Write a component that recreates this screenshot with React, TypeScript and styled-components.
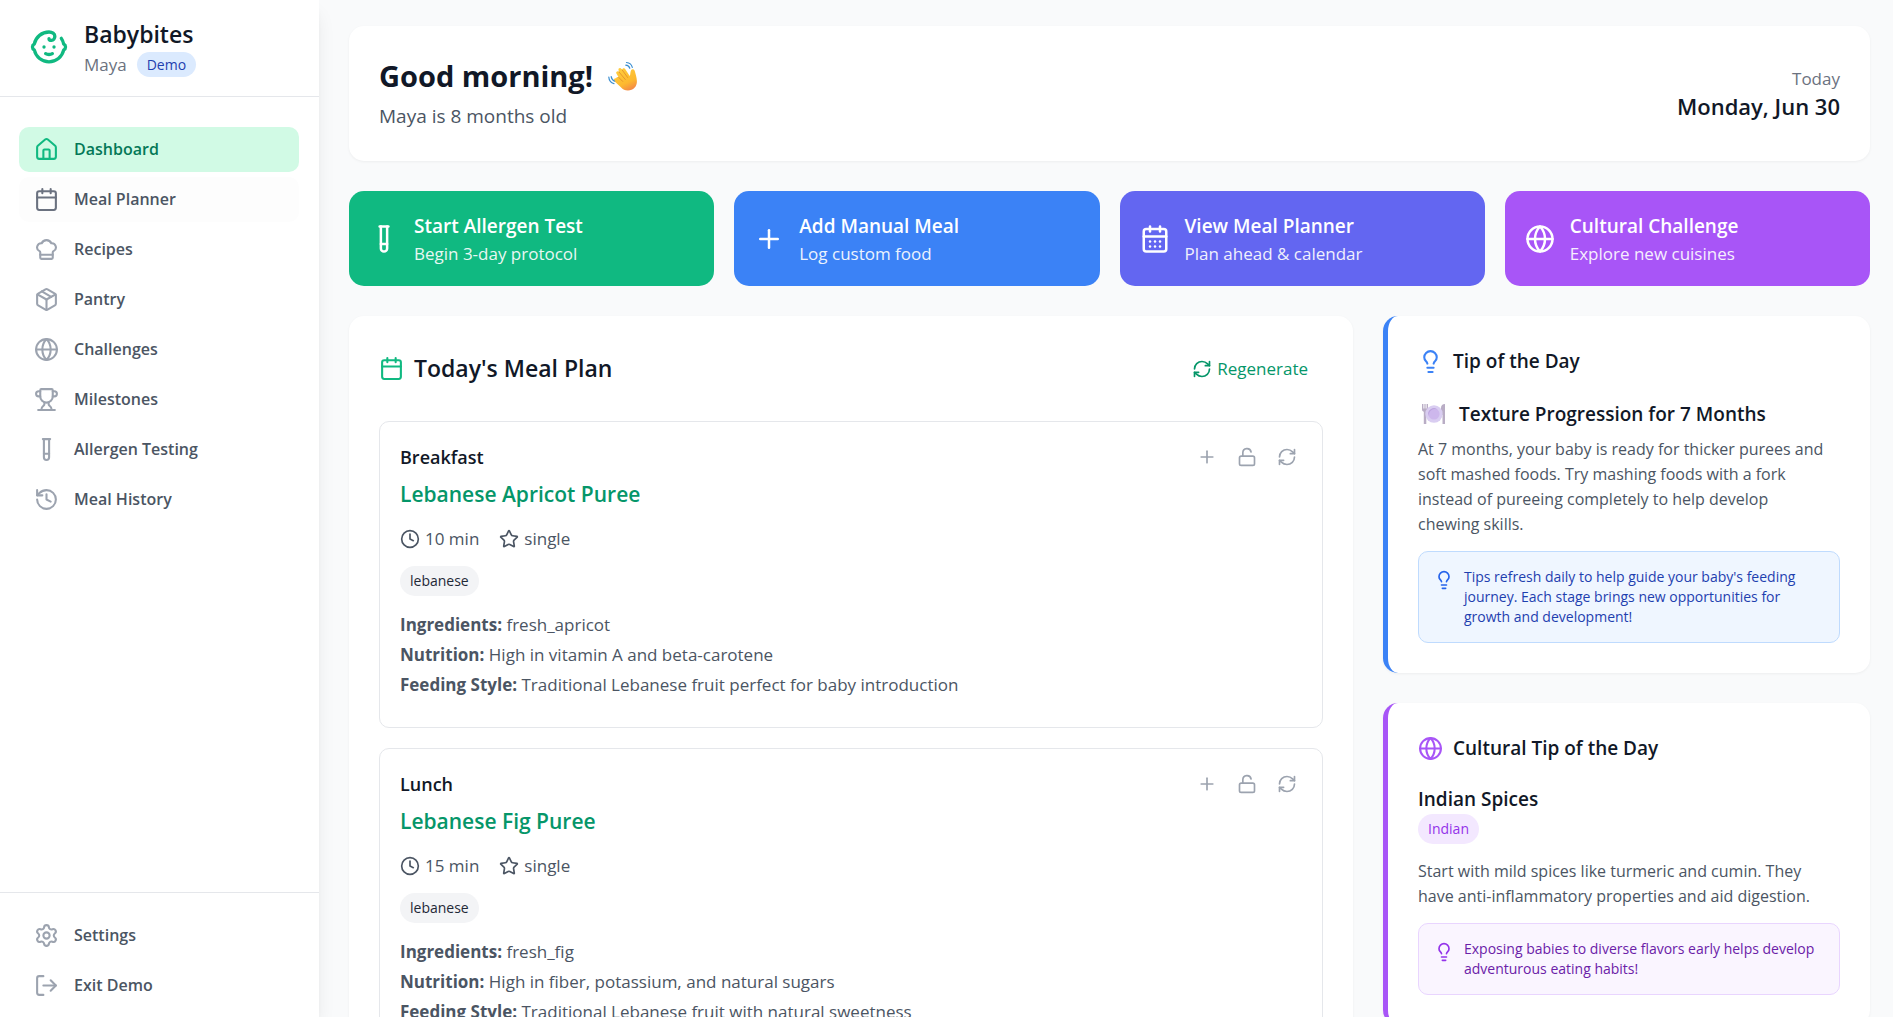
import React from "react";
import styled, { createGlobalStyle } from "styled-components";
import {
  Baby, House, Calendar, CalendarDays, ChefHat, Package, Globe, Trophy, TestTube, History,
  Settings, Plus, RefreshCw, LockOpen, Lightbulb, Clock, Star,
} from "lucide-react";

const GlobalStyle = createGlobalStyle`
  *, *::before, *::after { box-sizing: border-box; }
  body {
    margin: 0;
    background: #f9fafb;
    color: #111827;
    font-family: "Open Sans", "Noto Sans", sans-serif;
    font-size: 17px;
    line-height: 25px;
  }
  h1, h2, h3, h4, p, ul, dl, dd { margin: 0; padding: 0; }
  button { font: inherit; border: 0; background: none; cursor: pointer; text-align: left; }
  svg { flex: none; display: block; }
`;

const Shell = styled.div`
  display: flex;
  height: 100vh;
`;

const Sidebar = styled.aside`
  flex: none;
  width: 319px;
  display: flex;
  flex-direction: column;
  background: #fff;
  box-shadow: 0 12px 19px -4px rgba(0, 0, 0, 0.1), 0 5px 8px -5px rgba(0, 0, 0, 0.1);
`;

const Brand = styled.header`
  display: flex;
  align-items: center;
  gap: 15px;
  height: 97px;
  padding: 0 29px 3px;
  border-bottom: 1px solid #e5e7eb;
  svg { color: #10b981; }
`;

const BrandName = styled.h1`
  font-size: 23px;
  line-height: 35px;
  font-weight: 600;
`;

const Profile = styled.div`
  display: flex;
  align-items: center;
  gap: 10px;
  color: #6b7280;
`;

const Pill = styled.span<{ $bg: string; $fg: string; $tall?: boolean }>`
  display: inline-block;
  vertical-align: top;
  padding: 0 10px;
  border-radius: 15px;
  font-size: 14px;
  line-height: ${(p) => (p.$tall ? 30 : 25)}px;
  background: ${(p) => p.$bg};
  color: ${(p) => p.$fg};
`;

const NavList = styled.ul`
  list-style: none;
  display: flex;
  flex-direction: column;
  gap: 5px;
`;

const Nav = styled.nav`
  flex: 1;
  padding: 30px 20px 0 19px;
`;

const SideFoot = styled.nav`
  padding: 20px 20px 9px 19px;
  border-top: 1px solid #e5e7eb;
`;

const NavLink = styled.a<{ $state?: "active" | "hover" }>`
  display: flex;
  align-items: center;
  gap: 15px;
  height: 45px;
  padding: 0 15px;
  border-radius: 10px;
  font-size: 16px;
  font-weight: 600;
  text-decoration: none;
  background: ${(p) => (p.$state === "active" ? "#d1fae5" : p.$state === "hover" ? "#fdfdfd" : "transparent")};
  color: ${(p) => (p.$state === "active" ? "#047857" : "#4b5563")};
  svg { color: ${(p) => (p.$state === "active" ? "#10b981" : p.$state === "hover" ? "#6b7280" : "#9ca3af")}; }
`;

const Main = styled.main`
  flex: 1;
  min-width: 0;
  overflow-y: auto;
  scrollbar-width: none;
  display: flex;
  flex-direction: column;
  gap: 30px;
  padding: 26px 23px 30px 30px;
`;

const Card = styled.section<{ $accent?: string }>`
  padding: 30px;
  background: #fff;
  border-radius: 15px;
  border-left: ${(p) => (p.$accent ? `5px solid ${p.$accent}` : "0")};
  box-shadow: 0 1px 3px rgba(0, 0, 0, 0.05);
`;

const Welcome = styled(Card)`
  display: flex;
  align-items: center;
  justify-content: space-between;
`;

const Greeting = styled.h2`
  display: flex;
  align-items: center;
  gap: 15px;
  margin-bottom: 5px;
  font-size: 29px;
  line-height: 40px;
  font-weight: 700;
`;

const Age = styled.p`
  font-size: 19px;
  line-height: 30px;
  color: #4b5563;
`;

const Today = styled.div`
  text-align: right;
  color: #6b7280;
`;

const DateText = styled.p`
  font-size: 22px;
  line-height: 30px;
  font-weight: 600;
  color: #111827;
`;

const Actions = styled.div`
  display: grid;
  grid-template-columns: repeat(4, 1fr);
  gap: 20px;
`;

const Action = styled.button<{ $bg: string }>`
  display: flex;
  align-items: center;
  gap: 15px;
  padding: 20px;
  border-radius: 15px;
  background: ${(p) => p.$bg};
  color: #fff;
`;

const ActionTitle = styled.span`
  display: block;
  font-size: 19px;
  line-height: 30px;
  font-weight: 600;
`;

const ActionText = styled.span`
  display: block;
  opacity: 0.9;
`;

const Columns = styled.div`
  display: grid;
  grid-template-columns: repeat(3, 1fr);
  gap: 30px;
  align-items: start;
`;

const PlanCard = styled(Card)`
  grid-column: span 2;
`;

const Side = styled.div`
  display: flex;
  flex-direction: column;
  gap: 30px;
`;

const SplitRow = styled.div`
  display: flex;
  align-items: center;
  justify-content: space-between;
`;

const PlanTitle = styled.h2`
  display: flex;
  align-items: center;
  gap: 10px;
  font-size: 23px;
  line-height: 35px;
  font-weight: 600;
  svg { color: #10b981; }
`;

const Regenerate = styled.button`
  display: flex;
  align-items: center;
  gap: 5px;
  padding: 10px 15px;
  color: #059669;
`;

const Meals = styled.div`
  display: flex;
  flex-direction: column;
  gap: 20px;
  margin-top: 30px;
`;

const Meal = styled.article`
  padding: 20px 20px 30px;
  border: 1px solid #e5e7eb;
  border-radius: 10px;
`;

const Slot = styled.h3`
  font-size: 18px;
  line-height: 30px;
  font-weight: 600;
`;

const Tools = styled.div`
  display: flex;
  gap: 10px;
`;

const Tool = styled.button`
  padding: 5px;
  color: #9ca3af;
`;

const Recipe = styled.h4`
  margin: 7px 0 17px;
  font-size: 21px;
  line-height: 30px;
  font-weight: 600;
  color: #059669;
`;

const Meta = styled.div`
  display: flex;
  gap: 20px;
  margin-bottom: 15px;
  color: #4b5563;
`;

const MetaItem = styled.span`
  display: flex;
  align-items: center;
  gap: 5px;
`;

const Details = styled.dl`
  display: flex;
  flex-direction: column;
  gap: 5px;
  margin-top: 16px;
  color: #4b5563;
  dt { display: inline; font-weight: 700; }
  dd { display: inline; }
`;

const TipTitle = styled.h2<{ $color: string }>`
  display: flex;
  align-items: center;
  gap: 10px;
  margin-bottom: 20px;
  font-size: 19px;
  line-height: 30px;
  font-weight: 600;
  svg { color: ${(p) => p.$color}; }
`;

const TipHeading = styled.h3<{ $emoji?: boolean }>`
  display: flex;
  align-items: center;
  gap: 10px;
  min-height: ${(p) => (p.$emoji ? 35 : 31)}px;
  font-size: 19px;
  line-height: 30px;
  font-weight: 600;
`;

const TipText = styled.p<{ $gap: number }>`
  margin-top: ${(p) => p.$gap}px;
  padding-right: 10px;
  font-size: 16px;
  color: #4b5563;
`;

const Note = styled.div<{ $bg: string; $line: string; $fg: string; $icon: string }>`
  display: flex;
  gap: 10px;
  margin-top: 14px;
  padding: 15px;
  border: 1px solid ${(p) => p.$line};
  border-radius: 10px;
  background: ${(p) => p.$bg};
  color: ${(p) => p.$fg};
  font-size: 14px;
  line-height: 20px;
  svg { color: ${(p) => p.$icon}; margin-top: 3px; }
`;

const ExitIcon = () => (
  <svg width="25" height="25" viewBox="0 0 24 24" fill="none" stroke="currentColor" strokeWidth="2" strokeLinecap="round" strokeLinejoin="round">
    <path d="M9 21H5a2 2 0 0 1-2-2V5a2 2 0 0 1 2-2h4" />
    <path d="M16 17l5-5-5-5" />
    <path d="M21 12H9" />
  </svg>
);

const WaveEmoji = () => (
  <svg width="30" height="30" viewBox="0 0 30 30" fill="none" role="img" aria-label="waving hand">
    <defs>
      <linearGradient id="hand" x1="12" y1="5" x2="24" y2="30" gradientUnits="userSpaceOnUse">
        <stop stopColor="#ffcf3f" />
        <stop offset="0.65" stopColor="#fdb92f" />
        <stop offset="1" stopColor="#f2804a" />
      </linearGradient>
    </defs>
    <path d="M8.5 18.5c-1.2-1.5.8-3.3 2.2-2.1L8.4 12.5c-1-1.7 1.4-3.2 2.6-1.6l-.5-2c-.4-1.9 2-2.6 3-.9l.6.9c.2-1.9 2.6-2.1 3.4-.4l4.2 6.6c.9-1.6.4-4.3 1.5-6 1-1.6 3-.9 3.500.7.9 3.200 2 6.500 2.200 10.200.3 5.500-3.600 9.500-9 9.500-3 0-5-1-7-3.200l-6.500-6.100c-1.500-1.600.5-3.700 2.100-2.500z" fill="url(#hand)" />
    <path d="M10.7 16.4l4 4M11 11l6.3 7.5M14.1 8.9l5.6 7.6" stroke="#dc8328" strokeWidth=".7" strokeLinecap="round" />
    <path d="M18.500 1.500c2.900.2 5.100 2.100 5.800 4.900M17.800 4.200c2 .2 3.400 1.300 4 3.100M.8 16c.2 3.200 2.300 5.800 5.300 6.700M3.200 15.700c.3 2 1.600 3.700 3.500 4.500" stroke="#3a8ed0" strokeWidth="1.2" strokeLinecap="round" />
  </svg>
);

const PlateEmoji = () => (
  <svg width="31" height="24" viewBox="0 0 31 24" fill="none" role="img" aria-label="fork, plate and knife">
    <g fill="#b9adc5">
      <path d="M4 2h1.400v4.500h1V2h1.200v4.500h1V2H10v5.500C10 9 9 9.500 8.300 9.700V22H5.800V9.700C5 9.500 4 9 4 7.500z" />
      <path d="M24.500 22V13H23V6c0-2.500 1.500-4 4-4v20z" />
    </g>
    <circle cx="16" cy="12" r="8.700" fill="#d9cdf1" />
    <circle cx="16" cy="12" r="5.600" fill="#cdb7ec" />
    <path d="M11 14.500a5.600 5.600 0 0 1 9-6.500 6 6 0 0 0-9 6.500z" fill="#bda5df" />
  </svg>
);

type NavEntry = { label: string; icon: React.ReactNode; state?: "active" | "hover" };

const navEntries: NavEntry[] = [
  { label: "Dashboard", icon: <House size={25} />, state: "active" },
  { label: "Meal Planner", icon: <Calendar size={25} />, state: "hover" },
  { label: "Recipes", icon: <ChefHat size={25} /> },
  { label: "Pantry", icon: <Package size={25} /> },
  { label: "Challenges", icon: <Globe size={25} /> },
  { label: "Milestones", icon: <Trophy size={25} /> },
  { label: "Allergen Testing", icon: <TestTube size={25} /> },
  { label: "Meal History", icon: <History size={25} /> },
];

const footEntries: NavEntry[] = [
  { label: "Settings", icon: <Settings size={25} /> },
  { label: "Exit Demo", icon: <ExitIcon /> },
];

const actions = [
  { title: "Start Allergen Test", text: "Begin 3-day protocol", bg: "#10b981", icon: <TestTube size={30} /> },
  { title: "Add Manual Meal", text: "Log custom food", bg: "#3b82f6", icon: <Plus size={30} /> },
  { title: "View Meal Planner", text: "Plan ahead & calendar", bg: "#6366f1", icon: <CalendarDays size={30} /> },
  { title: "Cultural Challenge", text: "Explore new cuisines", bg: "#a855f7", icon: <Globe size={30} /> },
];

const meals = [
  {
    slot: "Breakfast", name: "Lebanese Apricot Puree", time: "10 min", level: "single", tag: "lebanese",
    ingredients: "fresh_apricot", nutrition: "High in vitamin A and beta-carotene",
    style: "Traditional Lebanese fruit perfect for baby introduction",
  },
  {
    slot: "Lunch", name: "Lebanese Fig Puree", time: "15 min", level: "single", tag: "lebanese",
    ingredients: "fresh_fig", nutrition: "High in fiber, potassium, and natural sugars",
    style: "Traditional Lebanese fruit with natural sweetness",
  },
];

const Entries = ({ items }: { items: NavEntry[] }) => (
  <NavList>
    {items.map((e) => (
      <li key={e.label}>
        <NavLink href="#" $state={e.state}>{e.icon}{e.label}</NavLink>
      </li>
    ))}
  </NavList>
);

export default function App() {
  return (
    <Shell>
      <GlobalStyle />
      <Sidebar>
        <Brand>
          <Baby size={40} />
          <div>
            <BrandName>Babybites</BrandName>
            <Profile>Maya <Pill $bg="#dbeafe" $fg="#1e40af">Demo</Pill></Profile>
          </div>
        </Brand>
        <Nav aria-label="Main"><Entries items={navEntries} /></Nav>
        <SideFoot aria-label="Account"><Entries items={footEntries} /></SideFoot>
      </Sidebar>
      <Main>
        <Welcome>
          <div>
            <Greeting>Good morning! <WaveEmoji /></Greeting>
            <Age>Maya is 8 months old</Age>
          </div>
          <Today>
            <p>Today</p>
            <DateText>Monday, Jun 30</DateText>
          </Today>
        </Welcome>
        <Actions>
          {actions.map((a) => (
            <Action key={a.title} $bg={a.bg}>
              {a.icon}
              <span>
                <ActionTitle>{a.title}</ActionTitle>
                <ActionText>{a.text}</ActionText>
              </span>
            </Action>
          ))}
        </Actions>
        <Columns>
          <PlanCard>
            <SplitRow>
              <PlanTitle><Calendar size={25} />Today's Meal Plan</PlanTitle>
              <Regenerate><RefreshCw size={20} />Regenerate</Regenerate>
            </SplitRow>
            <Meals>
              {meals.map((m) => (
                <Meal key={m.slot}>
                  <SplitRow>
                    <Slot>{m.slot}</Slot>
                    <Tools>
                      <Tool aria-label="Add"><Plus size={20} /></Tool>
                      <Tool aria-label="Lock"><LockOpen size={20} /></Tool>
                      <Tool aria-label="Refresh"><RefreshCw size={20} /></Tool>
                    </Tools>
                  </SplitRow>
                  <Recipe>{m.name}</Recipe>
                  <Meta>
                    <MetaItem><Clock size={20} />{m.time}</MetaItem>
                    <MetaItem><Star size={20} />{m.level}</MetaItem>
                  </Meta>
                  <Pill $bg="#f3f4f6" $fg="#1f2937" $tall>{m.tag}</Pill>
                  <Details>
                    <div><dt>Ingredients:</dt> <dd>{m.ingredients}</dd></div>
                    <div><dt>Nutrition:</dt> <dd>{m.nutrition}</dd></div>
                    <div><dt>Feeding Style:</dt> <dd>{m.style}</dd></div>
                  </Details>
                </Meal>
              ))}
            </Meals>
          </PlanCard>
          <Side>
            <Card $accent="#3b82f6">
              <TipTitle $color="#3b82f6"><Lightbulb size={25} />Tip of the Day</TipTitle>
              <TipHeading $emoji><PlateEmoji />Texture Progression for 7 Months</TipHeading>
              <TipText $gap={6}>
                At 7 months, your baby is ready for thicker purees and soft mashed foods. Try mashing foods
                with a fork instead of pureeing completely to help develop chewing skills.
              </TipText>
              <Note $bg="#eff6ff" $line="#bfdbfe" $fg="#1e40af" $icon="#2563eb">
                <Lightbulb size={20} />
                <p>Tips refresh daily to help guide your baby's feeding journey. Each stage brings new opportunities for growth and development!</p>
              </Note>
            </Card>
            <Card $accent="#a855f7">
              <TipTitle $color="#a855f7"><Globe size={25} />Cultural Tip of the Day</TipTitle>
              <TipHeading>Indian Spices</TipHeading>
              <Pill $bg="#f3e8ff" $fg="#9333ea" $tall>Indian</Pill>
              <TipText $gap={15}>
                Start with mild spices like turmeric and cumin. They have anti-inflammatory properties and aid digestion.
              </TipText>
              <Note $bg="#faf5ff" $line="#e9d5ff" $fg="#6b21a8" $icon="#9333ea">
                <Lightbulb size={20} />
                <p>Exposing babies to diverse flavors early helps develop adventurous eating habits!</p>
              </Note>
            </Card>
          </Side>
        </Columns>
      </Main>
    </Shell>
  );
}
